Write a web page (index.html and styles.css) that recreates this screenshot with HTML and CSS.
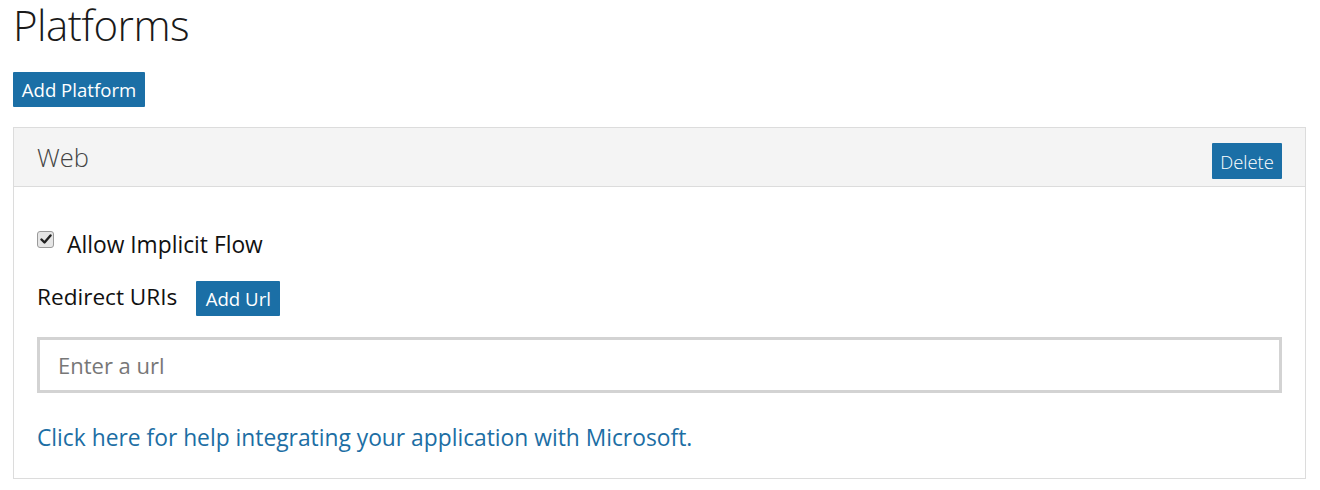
FILE: index.html
```html
<!DOCTYPE html>
<html lang="en">
<head>
<meta charset="utf-8">
<title>Platforms</title>
<link rel="stylesheet" href="styles.css">
</head>
<body>
<div class="page">
  <h1 class="title">Platforms</h1>
  <button class="btn btn-add">Add Platform</button>
  <section class="panel">
    <header class="panel-head">
      <span class="panel-title">Web</span>
      <button class="btn btn-delete">Delete</button>
    </header>
    <div class="panel-body">
      <label class="check-row">
        <span class="checkbox"><svg width="12" height="11" viewBox="0 0 12 11"><path d="M1.5 5.5 L4.5 8.5 L10.5 1.5" fill="none" stroke="#222" stroke-width="2.4" stroke-linecap="round" stroke-linejoin="round"/></svg></span>
        <span class="check-label">Allow Implicit Flow</span>
      </label>
      <div class="redirect-row">
        <span class="redirect-label">Redirect URIs</span>
        <button class="btn btn-url">Add Url</button>
      </div>
      <input class="url-input" type="text" placeholder="Enter a url">
      <a class="help-link" href="#">Click here for help integrating your application with Microsoft.</a>
    </div>
  </section>
</div>
</body>
</html>
```

FILE: styles.css
```css
* { box-sizing: border-box; }
html, body { margin: 0; padding: 0; background: #fff; }
body {
  font-family: "Segoe UI", "Open Sans", "Noto Sans", sans-serif;
  color: #111;
}
.page {
  padding: 0 14px 0 13px;
  display: flex;
  flex-direction: column;
  align-items: flex-start;
}
.title {
  margin: 0;
  font-weight: 300;
  font-size: 42px;
  line-height: 50px;
  letter-spacing: -0.5px;
  color: #1a1a1a;
}
.btn {
  font-family: inherit;
  border: none;
  background: #1b6fa6;
  color: #fff;
  border-radius: 1px;
  cursor: pointer;
  display: inline-flex;
  align-items: center;
  justify-content: center;
  padding: 0;
}
.btn-add {
  margin-top: 22px;
  width: 132px;
  height: 35px;
  font-size: 18.6px;
}
.panel {
  margin-top: 20px;
  align-self: stretch;
  border: 1px solid #dcdcdc;
  height: 352px;
}
.panel-head {
  height: 59px;
  background: #f4f4f4;
  border-bottom: 1px solid #dcdcdc;
  display: flex;
  align-items: center;
  justify-content: space-between;
  padding: 0 23px 0 23px;
}
.panel-title {
  font-size: 25.5px;
  font-weight: 300;
  color: #444;
}
.btn-delete {
  width: 70px;
  height: 36px;
  font-size: 18.4px;
  font-weight: 300;
  margin-top: 8px;
}
.panel-body {
  padding: 44px 23px 0 23px;
  display: flex;
  flex-direction: column;
}
.check-row {
  display: flex;
  align-items: flex-start;
  height: 28px;
}
.checkbox {
  width: 17px;
  height: 17px;
  border: 1px solid #9a9a9a;
  border-radius: 3px;
  background: #e6e6e6;
  display: flex;
  align-items: center;
  justify-content: center;
}
.check-label {
  margin-left: 13px;
  font-size: 22.8px;
  line-height: 28px;
}
.redirect-row {
  margin-top: 22px;
  display: flex;
  align-items: center;
}
.redirect-label {
  font-size: 22.6px;
  margin-top: -4px;
}
.btn-url {
  margin-left: 19px;
  width: 84px;
  height: 35px;
  font-size: 18.6px;
}
.url-input {
  margin-top: 21px;
  width: 100%;
  height: 56px;
  border: 3px solid #d3d3d3;
  padding: 0 18px;
  font-family: inherit;
  font-size: 22px;
  color: #333;
  outline: none;
}
.url-input::placeholder { color: #777; }
.help-link {
  margin-top: 30px;
  font-size: 22.8px;
  line-height: 30px;
  color: #1c6ea4;
  text-decoration: none;
}
```
